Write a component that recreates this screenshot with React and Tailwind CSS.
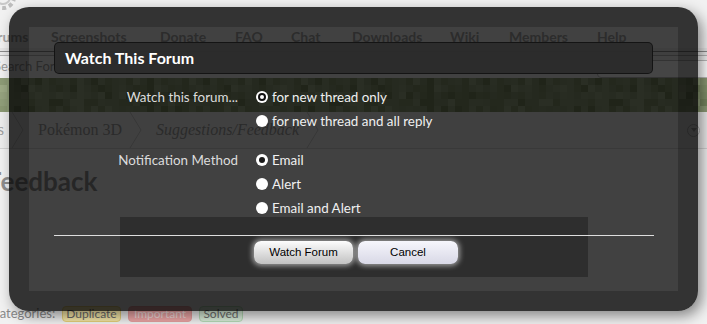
const greens = ["#8d9b76", "#84936c", "#95a27e", "#77865f", "#8a9872", "#9ca985", "#808f69", "#909e79"];

// mosaic band behind the overlay
function Mosaic() {
  const cells = [];
  for (let r = 0; r < 5; r++) {
    for (let c = 0; c < 102; c++) {
      const k = (c * 7 + r * 13 + ((c * r) % 5) * 3) % greens.length;
      cells.push(<rect key={r + "-" + c} x={c * 7} y={r * 7} width="7" height="7" fill={greens[k]} />);
    }
  }
  return (
    <svg width="707" height="34" className="block">
      {cells}
    </svg>
  );
}

function Chevron() {
  return (
    <svg width="34" height="36" className="shrink-0">
      <polyline points="8,0 19,18 8,36" fill="none" stroke="#c9c9c9" strokeWidth="1" />
    </svg>
  );
}

const navItems = [
  ["Forums", 69],
  ["Screenshots", 109],
  ["Donate", 75],
  ["FAQ", 56],
  ["Chat", 61],
  ["Downloads", 98],
  ["Wiki", 59],
  ["Members", 88],
  ["Help", 80],
];

function Page() {
  return (
    <div className="flex flex-col h-full">
      <div className="h-[24px] overflow-hidden">
        <svg width="30" height="30" className="-mt-[18px] -ml-[12px]">
          <circle cx="15" cy="15" r="11" fill="none" stroke="#bdbdbd" strokeWidth="4" strokeDasharray="4 3" />
          <circle cx="15" cy="15" r="7" fill="none" stroke="#c8c8c8" strokeWidth="2" />
        </svg>
      </div>
      <div className="h-[24px] flex items-center -ml-[18px] text-[14px] font-bold text-[#a2a2a2]">
        {navItems.map(([name, w]) => (
          <span key={name} className="shrink-0" style={{ width: w }}>
            {name}
          </span>
        ))}
      </div>
      <div className="h-[3px] bg-[#e6e6e6]" />
      <div className="h-[5px] border-t border-b border-t-[#8a8a8a] border-b-[#b4b4b4] bg-[#e9e9e9]" />
      <div className="h-[22px] flex items-center">
        <span className="w-[603px] shrink-0 -ml-[6px] text-[13px] text-[#9c9c9c]">Search Forums</span>
        <div className="w-[130px] h-[18px] mt-[4px] shrink-0 rounded-[4px] border border-[#bcbcbc] bg-white" />
      </div>
      <Mosaic />
      <div className="h-[37px] border-b border-[#d2d2d2] bg-[#ececec] flex items-center font-['Liberation_Serif',serif] text-[16px] text-[#9c9c9c]">
        <span className="-ml-[46px] w-[50px] shrink-0 text-right">Forums</span>
        <Chevron />
        <span className="shrink-0">Pokémon 3D</span>
        <Chevron />
        <span className="shrink-0 italic">Suggestions/Feedback</span>
        <Chevron />
        <div className="ml-auto mr-[7px] w-[13px] h-[13px] rounded-full border border-[#b8b8b8] flex items-center justify-center">
          <div className="w-0 h-0 border-l-[3px] border-r-[3px] border-t-[4px] border-l-transparent border-r-transparent border-t-[#aaaaaa]" />
        </div>
      </div>
      <div className="mt-[17px] h-[30px] -ml-[13px] text-[26px] leading-[30px] font-bold text-[#8e8e8e]">Feedback</div>
      <div className="flex-1" />
      <div className="h-[16px] mb-[2px] flex items-center text-[12px]">
        <span className="-ml-[9px] w-[71px] shrink-0 text-[13px] text-[#8a8a8a]">Categories:</span>
        <span className="w-[59px] h-[16px] shrink-0 rounded-[4px] border border-[#e6d07a] bg-[#f6e8a8] text-[#6a6a6a] text-center leading-[14px]">Duplicate</span>
        <span className="ml-[7px] w-[64px] h-[16px] shrink-0 rounded-[4px] border border-[#e8a0a0] bg-[#f0a8a8] text-[#f4dede] text-center leading-[14px]">Important</span>
        <span className="ml-[7px] w-[44px] h-[16px] shrink-0 rounded-[4px] border border-[#b8dcb8] bg-[#dcf0dc] text-[#707070] text-center leading-[14px]">Solved</span>
      </div>
    </div>
  );
}

function Radio({ checked, ring }) {
  if (!checked) return <div className="w-[12px] h-[12px] shrink-0 rounded-full bg-white" />;
  return (
    <div className="w-[12px] h-[12px] shrink-0 rounded-full bg-white flex items-center justify-center">
      {ring ? (
        <div className="w-[8px] h-[8px] rounded-full border-[2px] border-[#111] bg-white" />
      ) : (
        <div className="w-[6px] h-[6px] rounded-full bg-[#1a1a1a]" />
      )}
    </div>
  );
}

function Option({ label, checked, ring }) {
  return (
    <label className="h-[24px] flex items-center">
      <Radio checked={checked} ring={ring} />
      <span className="ml-[4px] text-[13.4px] text-[#f0f0f0]">{label}</span>
    </label>
  );
}

function CtrlUnit({ label, children, className = "" }) {
  return (
    <div className={"flex " + className}>
      <div className="w-[190px] shrink-0 pr-[6px] text-right h-[24px] leading-[24px] text-[13.4px] text-[#dcdcdc]">{label}</div>
      <div className="ml-[12px] flex flex-col">{children}</div>
    </div>
  );
}

function WatchOverlay() {
  return (
    <div className="absolute left-[9px] top-[7px] w-[689px] h-[304px] rounded-[20px] border-[20px] border-[rgba(0,0,0,0.79)] bg-[rgba(0,0,0,0.73)] bg-clip-padding shadow-[4px_5px_14px_rgba(0,0,0,0.45)] flex flex-col px-[25px] pt-[15px]">
      <div className="h-[32px] shrink-0 rounded-[5px] border border-[rgba(0,0,0,0.55)] bg-[rgba(44,44,44,0.96)] flex items-center px-[10px] text-[16px] font-bold text-white">
        Watch This Forum
      </div>

      <div className="mt-[11px]">
        <CtrlUnit label="Watch this forum...">
          <Option label="for new thread only" checked ring />
          <Option label="for new thread and all reply" />
        </CtrlUnit>
        <CtrlUnit label="Notification Method" className="mt-[15px]">
          <Option label="Email" checked />
          <Option label="Alert" />
          <Option label="Email and Alert" />
        </CtrlUnit>
      </div>

      <div className="ml-[66px] mt-[-3px] w-[468px] h-[60px] shrink-0 bg-[rgba(0,0,0,0.28)] flex flex-col">
        <div className="mt-[18px] -mx-[66px] h-[1px] bg-[#dedede]" />
        <div className="mt-[5px] pl-[134px] flex gap-[5px] font-['Liberation_Sans',sans-serif] text-[11.5px] text-black">
          <button className="w-[99px] h-[23px] rounded-[7px] bg-linear-to-b from-[#fdfdfd] to-[#c2c2c2] shadow-[0_0_5px_2px_rgba(255,255,255,0.5)]">
            Watch Forum
          </button>
          <button className="w-[100px] h-[23px] rounded-[7px] bg-linear-to-b from-[#f6f6fc] to-[#d8d8e6] shadow-[0_0_5px_2px_rgba(255,255,255,0.5)]">
            Cancel
          </button>
        </div>
      </div>
    </div>
  );
}

export default function App() {
  return (
    <div className="relative w-[707px] h-[324px] overflow-hidden bg-[#f1f1f1] font-['Lato',sans-serif]">
      <Page />
      <WatchOverlay />
    </div>
  );
}
